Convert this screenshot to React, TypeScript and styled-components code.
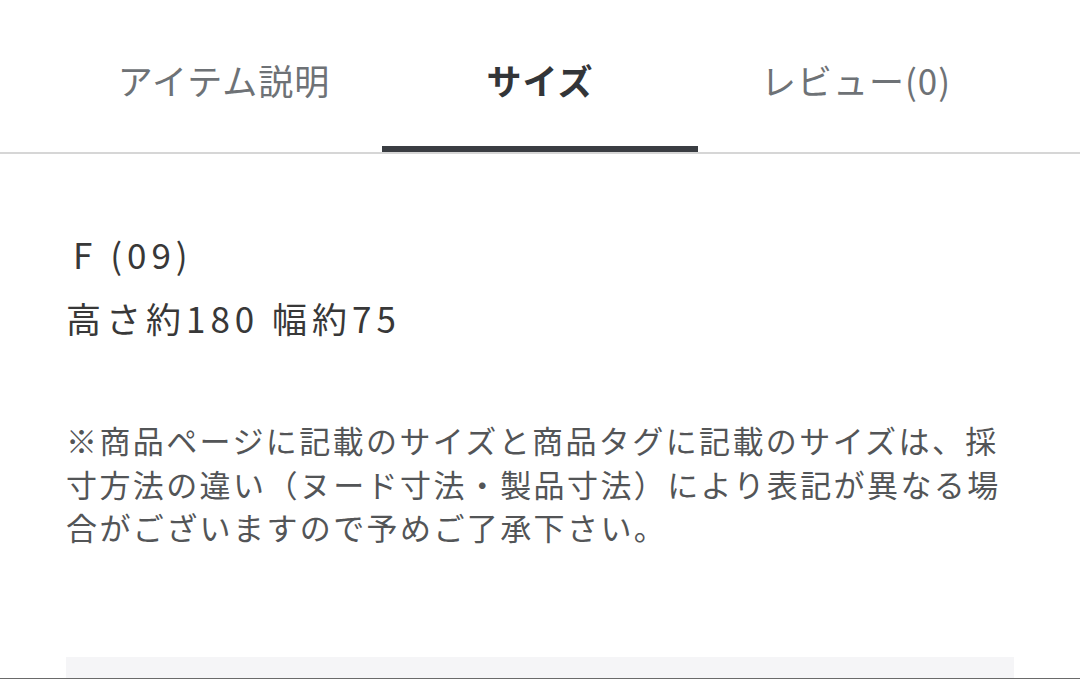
import styled, { createGlobalStyle } from "styled-components";

const GlobalStyle = createGlobalStyle`
  html, body {
    margin: 0;
    padding: 0;
    background: #fff;
  }
  body {
    font-family: "Noto Sans CJK JP", "Noto Sans", sans-serif;
  }
`;

const Page = styled.div`
  width: 1080px;
  height: 679px;
  overflow: hidden;
  display: flex;
  flex-direction: column;
  background: #fff;
  border-bottom: 1px solid #6a6a6a;
  box-sizing: border-box;
`;

const TabBar = styled.div`
  display: flex;
  justify-content: center;
  border-bottom: 2px solid #d6d6d6;
`;

const Tab = styled.div<{ $active?: boolean }>`
  width: 316px;
  height: 152px;
  box-sizing: border-box;
  padding-top: 58px;
  text-align: center;
  font-size: 35px;
  line-height: 44px;
  letter-spacing: 1px;
  font-weight: ${(p) => (p.$active ? 700 : 400)};
  color: ${(p) => (p.$active ? "#333538" : "#6e7276")};
  border-bottom: 6px solid ${(p) => (p.$active ? "#3a3d42" : "transparent")};
`;

const Content = styled.div`
  padding: 68px 66px 0;
  color: #383838;
`;

const SizeLine = styled.div<{ $indent?: number }>`
  font-size: 35px;
  line-height: 64px;
  letter-spacing: 5px;
  padding-left: ${(p) => p.$indent ?? 0}px;
`;

const Note = styled.p`
  margin: 68px 0 0;
  font-size: 31px;
  line-height: 43.5px;
  letter-spacing: 2.4px;
  color: #535557;
`;

const FooterBox = styled.div`
  margin: auto 66px 0;
  height: 21px;
  background: #f5f5f7;
`;

const tabs = [
  { label: "アイテム説明", active: false },
  { label: "サイズ", active: true },
  { label: "レビュー(0)", active: false },
];

export default function App() {
  return (
    <Page>
      <GlobalStyle />
      <TabBar>
        {tabs.map((t) => (
          <Tab key={t.label} $active={t.active}>
            {t.label}
          </Tab>
        ))}
      </TabBar>
      <Content>
        <SizeLine $indent={7}>F (09)</SizeLine>
        <SizeLine>高さ約180 幅約75</SizeLine>
        <Note>
          ※商品ページに記載のサイズと商品タグに記載のサイズは、採寸方法の違い（ヌード寸法・製品寸法）により表記が異なる場合がございますので予めご了承下さい。
        </Note>
      </Content>
      <FooterBox />
    </Page>
  );
}
